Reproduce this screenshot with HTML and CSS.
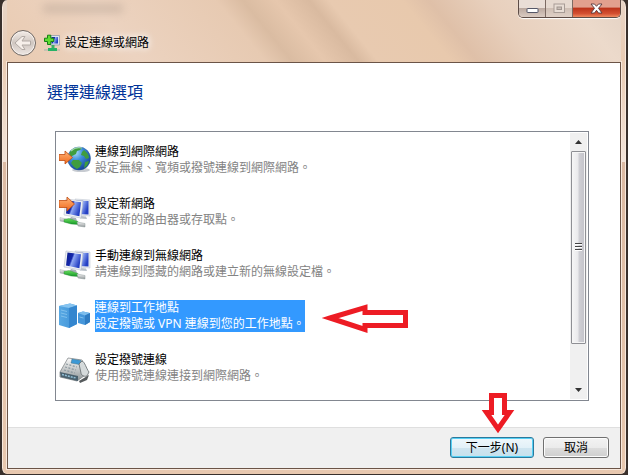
FILE: index.html
```html
<!DOCTYPE html>
<html lang="zh-Hant">
<head>
<meta charset="utf-8">
<title>設定連線或網路</title>
<link rel="stylesheet" href="styles.css">
</head>
<body>
<svg width="0" height="0" class="defs" aria-hidden="true">
  <defs>
    <linearGradient id="orange" x1="0" y1="0" x2="0" y2="1"><stop offset="0" stop-color="#ffb478"/><stop offset="1" stop-color="#f0691c"/></linearGradient>
    <radialGradient id="globe" cx=".35" cy=".25" r=".8"><stop offset="0" stop-color="#a8dcf8"/><stop offset=".4" stop-color="#3f8fdc"/><stop offset="1" stop-color="#123f96"/></radialGradient>
    <linearGradient id="screen" x1="0" y1="0" x2="1" y2=".4"><stop offset="0" stop-color="#0c1c88"/><stop offset=".45" stop-color="#1428ac"/><stop offset=".55" stop-color="#8fa8f2"/><stop offset="1" stop-color="#2440c4"/></linearGradient>
    <linearGradient id="green" x1="0" y1="0" x2="0" y2="1"><stop offset="0" stop-color="#6be05e"/><stop offset="1" stop-color="#109426"/></linearGradient>
    <linearGradient id="metal" x1="0" y1="0" x2="0" y2="1"><stop offset="0" stop-color="#fafafa"/><stop offset="1" stop-color="#8d9496"/></linearGradient>
    <linearGradient id="tower" x1="0" y1="0" x2="1" y2="0"><stop offset="0" stop-color="#58a9e4"/><stop offset="1" stop-color="#3d90d6"/></linearGradient>
    <g id="computers">
      <path d="M16 3 31 4v16l-12-1z" fill="#e9edf2" stroke="#c3cad4" stroke-width=".6"/>
      <path d="M17 4.500 29.500 5v13.500L19 18z" fill="url(#screen)"/>
      <path d="m22 20 5 .5 1 2.500-7-.5z" fill="#b7bfc7"/>
      <path d="M7 3 24 5l-2 17L5 19z" fill="#eef1f5" stroke="#b7bec9" stroke-width=".6"/>
      <path d="m8.500 4.500 13.500 1.700-1.600 14L7 17.500z" fill="url(#screen)"/>
      <path d="m12 21 5 1 1 3-8-1z" fill="#a9b1b9"/>
      <path d="M1 21.500 9 23.500l-.5 3L1 25z" fill="url(#metal)" stroke="#a4abae" stroke-width=".5"/>
      <path d="m5 23.500 5-1 9 3v3L12 28l-7-2z" fill="url(#green)" stroke="#2b8c34" stroke-width=".4"/>
      <path d="m18 26 8 1.500V31l-7-1z" fill="url(#metal)" stroke="#8d9899" stroke-width=".5"/>
    </g>
  </defs>
</svg>

<div class="window">
  <header class="titlebar">
    <div class="ghost" aria-hidden="true"></div>
    <div class="caption-buttons">
      <button class="cap" aria-label="最小化"><svg width="13" height="7" viewBox="0 0 13 7"><rect x="1" y="1.500" width="11" height="4" rx=".5" fill="#fff" stroke="#555768"/></svg></button>
      <button class="cap" aria-label="最大化" disabled><svg width="13" height="11" viewBox="0 0 13 11"><rect x="1" y="1" width="10.500" height="8.500" fill="#e8ddd5" stroke="#a79c96"/><rect x="4" y="4" width="4.500" height="2.500" fill="#c9bdb6" stroke="#a0958f"/></svg></button>
      <button class="cap close" aria-label="關閉"><svg width="13" height="11" viewBox="0 0 13 11"><path d="M1 1h3.500l2 2.300L8.500 1H12L8.500 5.300 12 10H8.500l-2-2.700-2 2.700H1l3.500-4.700z" fill="#fff" stroke="#55383c" stroke-width=".9"/></svg></button>
    </div>
    <div class="nav">
      <button class="back" aria-label="上一頁"><svg width="20" height="20" viewBox="0 0 20 20"><path d="m2 10 7-6.500h3L9 8h8.500v4H9l3 4.500H9z" fill="#f6efea" stroke="#b2aaa5"/></svg></button>
      <svg class="app-icon" width="16" height="18" viewBox="0 0 16 18" aria-hidden="true">
        <path d="M6 1.500h9.500V11H6z" fill="#dfe6ef" stroke="#8793a5" stroke-width=".7"/>
        <path d="M7.500 3h6.500v6.500H7.500z" fill="url(#screen)"/>
        <path d="M7.500 11h3v3h-3z" fill="#3cae66"/><path d="M0 16h16" stroke="#a4b4ac"/><path d="M4 14h9v3H4z" fill="#26b266"/>
        <path d="M3.500 1.200h3.300v3h3v3.300h-3v3H3.500v-3h-3V4.200h3z" fill="#5fdc31" stroke="#168116"/>
      </svg>
      <span class="title">設定連線或網路</span>
    </div>
  </header>

  <main class="panel">
    <section class="content">
      <h1>選擇連線選項</h1>
      <div class="listbox">
        <ul class="options">
          <li><button class="option">
            <svg width="32" height="32" viewBox="0 0 32 32" aria-hidden="true">
              <ellipse cx="22" cy="26" rx="9" ry="2" fill="#c7cbd1"/>
              <circle cx="20" cy="14.500" r="11.500" fill="url(#globe)" stroke="#2c5f9c" stroke-width=".5"/>
              <path d="M11 8c3-5 9-5 12-4l-2 2-3 1-1 3-4 2-3 1zM25 6c3 2 5 5 5 8l-3 1-2-3-3-1 1-3zM14 16l6 0 3 3-2 4-3 2-3-2-3-4zM26 18l4-1c-1 4-3 6-5 7z" fill="#3f9d3e"/>
              <path d="M12 7c3-3 7-4 11-3" fill="none" stroke="#c9ecd0" stroke-width="1.200" opacity=".7"/>
              <path d="M0 10.500h6V7l7.500 6.500L6 20v-3.500H0z" fill="url(#orange)" stroke="#c04b12" stroke-width=".8"/>
            </svg>
            <span class="label"><span class="name">連線到網際網路</span><span class="desc">設定無線、寬頻或撥號連線到網際網路。</span></span>
          </button></li>
          <li><button class="option">
            <svg width="32" height="32" viewBox="0 0 32 32" aria-hidden="true"><use href="#computers"/><path d="M0 4.500h8V1l7.500 7L8 15v-3.500H0z" fill="url(#orange)" stroke="#c04b12" stroke-width=".8"/></svg>
            <span class="label"><span class="name">設定新網路</span><span class="desc">設定新的路由器或存取點。</span></span>
          </button></li>
          <li><button class="option">
            <svg width="32" height="32" viewBox="0 0 32 32" aria-hidden="true"><use href="#computers"/></svg>
            <span class="label"><span class="name">手動連線到無線網路</span><span class="desc">請連線到隱藏的網路或建立新的無線設定檔。</span></span>
          </button></li>
          <li class="marked"><button class="option selected" aria-pressed="true">
            <svg width="32" height="32" viewBox="0 0 32 32" aria-hidden="true">
              <path d="M0 6 11 3.500l7 2V24l-8 4-10-3z" fill="url(#tower)"/>
              <path d="m0 6 11-2.500 7 2L10 8z" fill="#86c4f0"/><path d="M10 8v20l8-4V5.500z" fill="#3486cf"/>
              <path d="M2 10 8 11.500M2 13 8 14.500M2 16 8 17.500" stroke="#8bc8f0" stroke-width=".8"/>
              <path d="m19 13 5-1.500 7 1.500v9l-5 3-7-2z" fill="#4596da"/><path d="m19 13 5-1.500 7 1.500-5 2.500z" fill="#7dbdec"/><path d="M26 15.500V25l5-3v-9z" fill="#2f7cc2"/>
              <path d="m20.500 17 4 1" stroke="#8bc8f0" stroke-width=".8"/>
            </svg>
            <span class="label"><span class="name">連線到工作地點</span><span class="desc">設定撥號或 VPN 連線到您的工作地點。</span></span>
          </button>
          <svg class="arrow-left" width="90" height="32" viewBox="0 0 90 32" aria-hidden="true"><path d="m9 16 35-10.500v5h40.500v13H44v4z" fill="#fff" stroke="#ed1c24" stroke-width="5"/></svg></li>
          <li><button class="option">
            <svg width="32" height="32" viewBox="0 0 32 32" aria-hidden="true">
              <path d="m1 20 8-14 14 2 6 13-11 8-17-4z" fill="url(#metal)" stroke="#777d80" stroke-width=".7"/>
              <path d="m1 20 18 4v5L2 25z" fill="#49606e"/><path d="m3 22.500 14 3.500" stroke="#91bed5" stroke-width="1.500" stroke-dasharray="2 1"/>
              <path d="m13 7 9 1.500-1.500 4L12 11z" fill="#3c99d6" stroke="#477184" stroke-width=".5"/>
              <path d="m7 12 11 3M6 15l11 3M5 18l11 3" stroke="#8a979e" stroke-width="1.200" stroke-dasharray="2 1.500"/>
              <path d="m20 12 3-3c3 1 4 7 7 11l-2 4c-3 1-6-1-6-3z" fill="#d5dadb" stroke="#60676a" stroke-width=".8"/>
              <path d="m20 29 10-6-2 5-7 3z" fill="#565b5d"/>
            </svg>
            <span class="label"><span class="name">設定撥號連線</span><span class="desc">使用撥號連線連接到網際網路。</span></span>
          </button></li>
        </ul>
        <div class="scrollbar">
          <button class="step" aria-label="向上捲動"><svg width="7" height="4" viewBox="0 0 7 4"><path d="M3.500 0 7 4H0z" fill="#333"/></svg></button>
          <div class="track"><div class="thumb"><svg width="7" height="9" viewBox="0 0 7 9"><path d="M0 .5h7M0 3.500h7M0 6.500h7" stroke="#444"/><path d="M0 1.500h7M0 4.500h7M0 7.500h7" stroke="#fff"/></svg></div></div>
          <button class="step" aria-label="向下捲動"><svg width="7" height="4" viewBox="0 0 7 4"><path d="M0 0h7L3.500 4z" fill="#333"/></svg></button>
        </div>
      </div>
    </section>
    <footer class="actions">
      <div class="next-wrap">
        <button class="btn next">下一步(N)</button>
        <svg class="arrow-down" width="34" height="44" viewBox="0 0 34 44" aria-hidden="true"><path d="M10.500 4.500h13v17h5L17 38 5.500 21.500h5z" fill="#fff" stroke="#ed1c24" stroke-width="5"/></svg>
      </div>
      <button class="btn cancel">取消</button>
    </footer>
  </main>
</div>
</body>
</html>
```
FILE: styles.css
```css
* { box-sizing: border-box; }

body {
  margin: 0;
  background: #39302c;
  font: 12px/16px "Noto Sans", "Noto Sans CJK TC", sans-serif;
  color: #000;
}

button { font: inherit; color: inherit; padding: 0; margin: 0; }

svg { display: block; flex: none; }

.defs { position: absolute; }

.window {
  min-height: 100vh;
  display: flex;
  flex-direction: column;
  padding: 0 5px 5px;
  border: solid #39302c;
  border-width: 0 2px 1px;
  border-radius: 7px;
  box-shadow: inset 1px 0 #f8e8dc, inset -1px 0 #f8e8dc;
  background: linear-gradient(#e8d5c7, #e9cbb3 62px, #f2e4da 162px, #dcbaa3 162px, #e8c8af);
}

.titlebar {
  position: relative;
  height: 62px;
  padding-top: 30px;
  background: linear-gradient(51deg, #e9cbb2 0%, #ecd3c0 20%, #e7cab2 39%, #dabca2 43%, #e6c7ad 48%, #d9baa0 53%, #e8cab0 56%, #e8c9ad 67%, #dfc0a8 71%, #e8d0bd 80%, #ecdacb 92%, #e4d2c4 100%);
}

.ghost {
  position: absolute;
  top: 4px;
  left: 36px;
  width: 80px;
  height: 9px;
  background: #b9a596;
  opacity: .5;
  filter: blur(4px);
}

.caption-buttons {
  position: absolute;
  top: 0;
  right: 0;
  display: flex;
  height: 18px;
  border: 1px solid #5d4c46;
  border-top: 0;
  border-radius: 0 0 5px 5px;
  box-shadow: 0 1px 1px #fff;
  overflow: hidden;
}

.cap {
  width: 27px;
  display: grid;
  place-items: center;
  padding-top: 4px;
  border: 0;
  border-right: 1px solid #7c6a63;
  background: linear-gradient(#e9ddd6 0 45%, #bba9a0 50%, #dacbc2);
}

.cap:disabled { padding-top: 0; background: linear-gradient(#e6d9d0 0 45%, #cfbfb5 50%, #dfd0c6); }

.close {
  width: 47px;
  padding-top: 0;
  border-right: 0;
  background: linear-gradient(#e2a08e 0 40%, #bd351c 50%, #d35032 80%, #f08a60);
}

.nav {
  display: flex;
  align-items: center;
  height: 26px;
  padding-left: 3px;
}

.back {
  width: 26px;
  height: 26px;
  display: grid;
  place-items: center;
  border: 1px solid #6f6864;
  border-radius: 50%;
  background: linear-gradient(#f3ece7, #cfc6c0 50%, #eee7e3);
  box-shadow: inset 0 0 0 1px #f8f2ee;
}

.app-icon { margin-left: 8px; }

.title {
  margin-left: 5px;
  text-shadow: 0 0 6px #fff, 0 0 10px #fff;
}

.panel {
  flex: 1;
  display: flex;
  flex-direction: column;
  border: 1px solid #6b5447;
  box-shadow: 0 0 0 1px #f8e8dc;
  background: #fff;
}

.content {
  flex: 1;
  display: flex;
  flex-direction: column;
  padding: 17px 31px 26px 47px;
}

h1 {
  margin: 0 0 27px -8px;
  font-size: 16px;
  line-height: 24px;
  font-weight: 400;
  color: #003399;
}

.listbox {
  flex: 1;
  display: flex;
  padding: 1px;
  border: 1px solid #828790;
}

.options {
  flex: 1;
  display: grid;
  align-content: start;
  row-gap: 20px;
  margin: 0;
  padding: 11px 0 0 2px;
  list-style: none;
}

.option {
  display: flex;
  gap: 4px;
  border: 0;
  background: none;
  text-align: left;
}

.label { display: block; }

.name, .desc { display: block; }

.desc { color: #838383; }

.selected .label,
.selected .desc {
  color: #fff;
  background: #3399ff;
}

.marked { position: relative; }

.arrow-left {
  position: absolute;
  top: 2px;
  left: 262px;
}

.scrollbar {
  width: 17px;
  display: flex;
  flex-direction: column;
  background: #f0f0f0;
}

.step {
  height: 18px;
  display: grid;
  place-items: center;
  border: 0;
  background: #f0f0f0;
}

.track { flex: 1; }

.thumb {
  height: 84%;
  display: grid;
  place-items: center;
  margin: 0 1px;
  border: 1px solid #8e8f94;
  border-radius: 1px;
  background: linear-gradient(90deg, #f6f6f6, #e9e9eb 48%, #d0d0d5 52%, #c2c2c9);
  box-shadow: inset 0 0 0 1px #f5f5f5;
}

.actions {
  display: flex;
  justify-content: flex-end;
  gap: 9px;
  padding: 9px 11px 10px;
  border-top: 1px solid #dfdfdf;
  background: #f0f0f0;
}

.next-wrap { position: relative; }

.btn {
  display: block;
  height: 21px;
  border: 1px solid #707070;
  border-radius: 3px;
  background: linear-gradient(#f3f3f3, #ebebeb 50%, #dddddd 50%, #cfcfcf);
  box-shadow: inset 0 0 0 1px #fcfcfc;
  line-height: 16px;
}

.next {
  width: 84px;
  border-color: #2c799c;
  background: linear-gradient(#eff7fb, #e2f1f8 50%, #cfe5f0 50%, #c5e1ed);
  box-shadow: inset 0 0 0 1px #55d0f5;
}

.cancel { width: 66px; }

.arrow-down {
  position: absolute;
  left: 31px;
  bottom: 23px;
}
```
